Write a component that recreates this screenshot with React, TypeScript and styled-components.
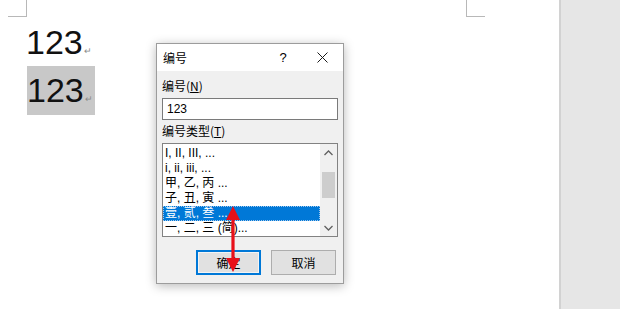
import React from 'react';
import styled, { createGlobalStyle } from 'styled-components';

const GlobalStyle = createGlobalStyle`
    html, body {
        margin: 0;
        padding: 0;
        background: #ffffff;
    }
    body {
        width: 620px;
        height: 309px;
        overflow: hidden;
    }
`;

const items = [
    'I, II, III, ...',
    'i, ii, iii, ...',
    '甲, 乙, 丙 ...',
    '子, 丑, 寅 ...',
    '壹, 贰, 叁 ...',
    '一, 二, 三 (简)...',
];

export default function App() {
    return (
        <>
            <GlobalStyle />
            <Screen>
                <Page>
                    <CornerMark side="left" />
                    <CornerMark side="right" />
                    <DocText>
                        <DocLine>
                            123<ParaMark>↵</ParaMark>
                        </DocLine>
                        <DocLine>
                            <Highlight>
                                123<ParaMark>↵</ParaMark>
                            </Highlight>
                        </DocLine>
                    </DocText>

                    <Dialog>
                        <TitleBar>
                            <Title>编号</Title>
                            <HelpButton>?</HelpButton>
                            <CloseButton>
                                <svg width="11" height="11" viewBox="0 0 11 11">
                                    <path
                                        d="M0.5 0.5 L10.5 10.5 M10.5 0.5 L0.5 10.5"
                                        stroke="#1a1a1a"
                                        strokeWidth="1"
                                    />
                                </svg>
                            </CloseButton>
                        </TitleBar>
                        <Body>
                            <Label>
                                编号(<u>N</u>)
                            </Label>
                            <TextInput>123</TextInput>
                            <Label>
                                编号类型(<u>T</u>)
                            </Label>
                            <ListBox>
                                <ListItems>
                                    {items.map((item, i) => (
                                        <ListItem key={item} selected={i === 4}>
                                            {item}
                                        </ListItem>
                                    ))}
                                </ListItems>
                                <ScrollBar>
                                    <ScrollArrow>
                                        <svg width="9" height="6" viewBox="0 0 9 6">
                                            <path d="M0.5 5 L4.5 1 L8.5 5" fill="none" stroke="#606060" strokeWidth="1.3" />
                                        </svg>
                                    </ScrollArrow>
                                    <ScrollTrack>
                                        <Thumb />
                                    </ScrollTrack>
                                    <ScrollArrow>
                                        <svg width="9" height="6" viewBox="0 0 9 6">
                                            <path d="M0.5 1 L4.5 5 L8.5 1" fill="none" stroke="#606060" strokeWidth="1.3" />
                                        </svg>
                                    </ScrollArrow>
                                </ScrollBar>
                            </ListBox>
                            <ButtonRow>
                                <DialogButton primary>确定</DialogButton>
                                <DialogButton>取消</DialogButton>
                            </ButtonRow>
                        </Body>
                    </Dialog>

                    <Arrow width="16" height="66" viewBox="0 0 16 66">
                        <path d="M8 0 L15 14 L9.6 14 L9.6 52 L15 52 L8 66 L1 52 L6.4 52 L6.4 14 L1 14 Z" fill="#e8101a" />
                    </Arrow>
                </Page>
                <SidePanel />
            </Screen>
        </>
    );
}

const Screen = styled.div`
    display: flex;
    width: 620px;
    height: 309px;
`;

const Page = styled.div`
    position: relative;
    flex: 1;
    background: #ffffff;
`;

const SidePanel = styled.div`
    width: 59px;
    background: #e6e6e6;
    border-left: 2px solid #d2d2d2;
`;

const CornerMark = styled.div<{ side: 'left' | 'right' }>`
    position: absolute;
    top: 0;
    width: 18px;
    height: 16px;
    border-bottom: 1px solid #b8b8b8;
    ${({ side }) =>
        side === 'left'
            ? 'left: 8px; border-right: 1px solid #b8b8b8;'
            : 'left: 466px; border-left: 1px solid #b8b8b8;'}
`;

const DocText = styled.div`
    padding: 20px 0 0 26px;
    font-family: 'Liberation Sans', Arial, sans-serif;
    font-size: 34px;
    color: #111111;
`;

const DocLine = styled.div`
    height: 45px;
    line-height: 45px;
`;

const Highlight = styled.span`
    display: inline-block;
    height: 49px;
    line-height: 49px;
    margin-top: 1px;
    margin-left: 1px;
    padding: 0 2px 0 0;
    background: #c8c8c8;
`;

const ParaMark = styled.span`
    font-size: 9px;
    color: #8a8a8a;
    margin-left: 1px;
`;

const Dialog = styled.div`
    position: absolute;
    left: 156px;
    top: 43px;
    width: 186px;
    height: 239px;
    border: 1px solid #9c9c9c;
    background: #f0f0f0;
    box-shadow: 0 2px 10px rgba(0, 0, 0, 0.28);
    font-family: 'Noto Sans CJK SC', 'Microsoft YaHei', sans-serif;
    font-size: 12px;
    color: #000000;
`;

const TitleBar = styled.div`
    display: flex;
    align-items: center;
    height: 27px;
    background: #ffffff;
`;

const Title = styled.div`
    flex: 1;
    padding-left: 6px;
`;

const HelpButton = styled.div`
    width: 36px;
    text-align: center;
    font-family: 'Liberation Sans', Arial, sans-serif;
    font-size: 13px;
`;

const CloseButton = styled.div`
    display: flex;
    align-items: center;
    justify-content: center;
    width: 42px;
`;

const Body = styled.div`
    display: flex;
    flex-direction: column;
    padding: 7px 5px 0 5px;
`;

const Label = styled.div`
    height: 16px;
    line-height: 16px;

    u {
        text-decoration-thickness: 1px;
        text-underline-offset: 1px;
    }
`;

const TextInput = styled.div`
    margin-top: 4px;
    height: 20px;
    line-height: 20px;
    padding-left: 4px;
    border: 1px solid #7a7a7a;
    background: #ffffff;
    font-family: 'Liberation Sans', Arial, sans-serif;
    font-size: 12px;
    margin-bottom: 3px;
`;

const ListBox = styled.div`
    display: flex;
    margin-top: 4px;
    height: 92px;
    border: 1px solid #828282;
    background: #ffffff;
`;

const ListItems = styled.div`
    flex: 1;
    padding-top: 2px;
    overflow: hidden;
`;

const ListItem = styled.div<{ selected?: boolean }>`
    height: 15px;
    line-height: 15px;
    padding-left: 2px;
    white-space: nowrap;
    font-family: 'Liberation Sans', 'Noto Sans CJK SC', sans-serif;
    font-size: 12px;
    background: ${({ selected }) => (selected ? '#0078d7' : 'transparent')};
    color: ${({ selected }) => (selected ? '#ffffff' : '#000000')};
    outline: ${({ selected }) => (selected ? '1px dotted #9fc7ee' : 'none')};
    outline-offset: -1px;
`;

const ScrollBar = styled.div`
    display: flex;
    flex-direction: column;
    width: 17px;
    background: #f0f0f0;
`;

const ScrollArrow = styled.div`
    display: flex;
    align-items: center;
    justify-content: center;
    height: 17px;
`;

const ScrollTrack = styled.div`
    flex: 1;
    padding: 11px 2px 0 2px;
`;

const Thumb = styled.div`
    height: 26px;
    background: #cdcdcd;
`;

const ButtonRow = styled.div`
    display: flex;
    justify-content: flex-end;
    gap: 10px;
    margin-top: 13px;
    padding-right: 2px;
`;

const DialogButton = styled.div<{ primary?: boolean }>`
    box-sizing: border-box;
    width: 65px;
    height: 25px;
    display: flex;
    align-items: center;
    justify-content: center;
    background: #e1e1e1;
    border: ${({ primary }) => (primary ? '2px solid #0078d7' : '1px solid #adadad')};
    box-shadow: ${({ primary }) => (primary ? 'inset 0 0 0 1px #f4f4f4' : 'none')};
`;

const Arrow = styled.svg`
    position: absolute;
    left: 225px;
    top: 206px;
`;
